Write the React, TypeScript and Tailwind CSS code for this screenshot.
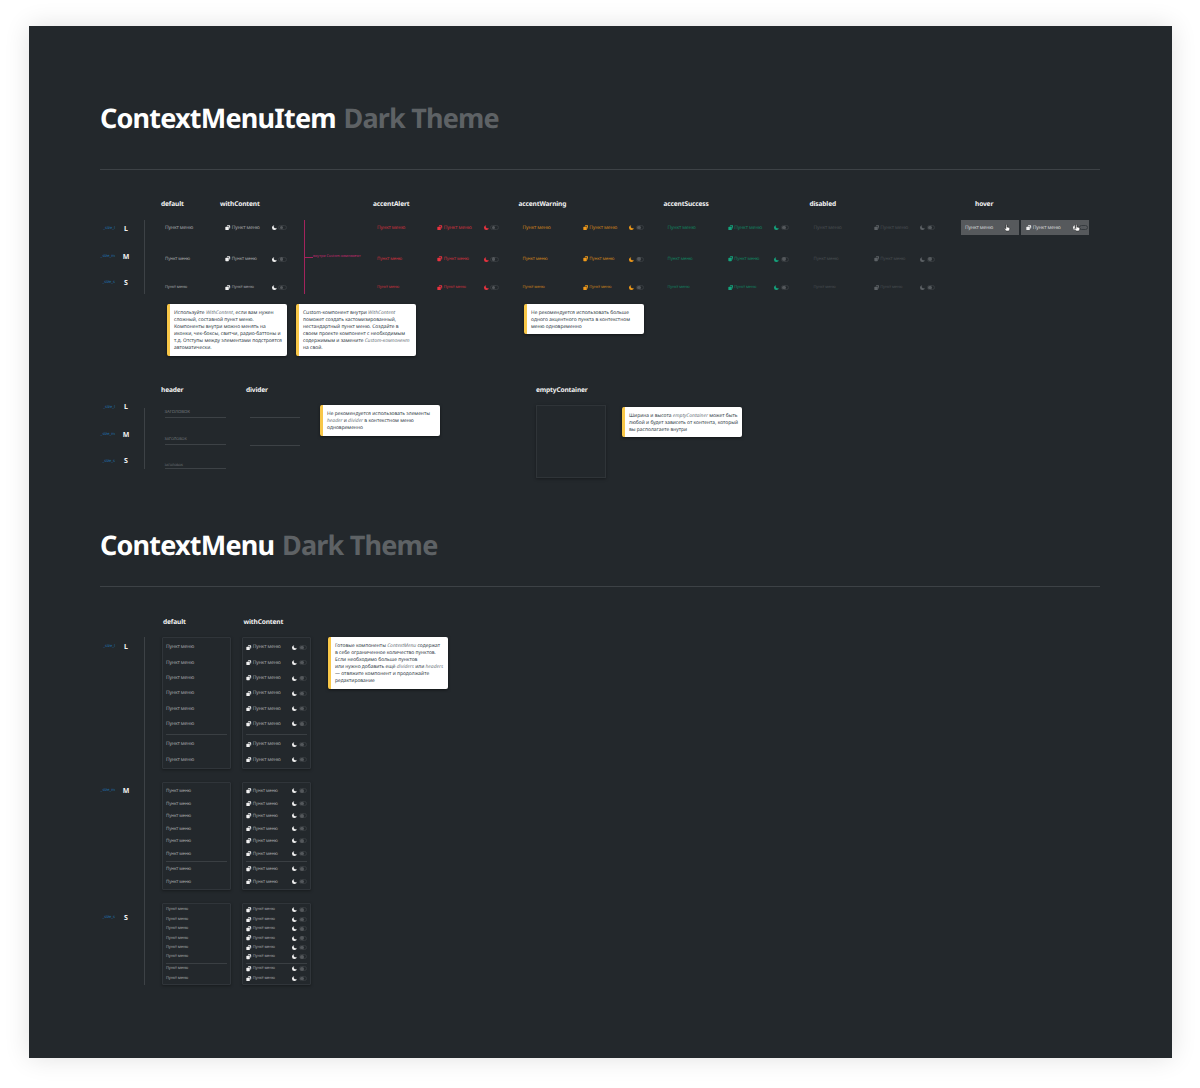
import React from 'react';

type Size = 'l' | 'm' | 's';
type Variant = 'default' | 'alert' | 'warning' | 'success' | 'disabled';

const textSize: Record<Size, string> = {
  l: 'pt-[1px] text-[5px] tracking-[-0.12px]',
  m: 'pt-[1px] text-[4.5px] tracking-[-0.12px]',
  s: 'pt-[1px] text-[4px] tracking-[-0.12px]',
};

const textColor: Record<Variant, string> = {
  default: 'text-[#a3a6a8]',
  alert: 'text-[#c9303d]',
  warning: 'text-[#c9801c]',
  success: 'text-[#12805f]',
  disabled: 'text-[#474c50]',
};

const iconColor: Record<Variant, string> = {
  default: 'text-[#f2f2f2]',
  alert: 'text-[#e8323f]',
  warning: 'text-[#f09a1a]',
  success: 'text-[#14a37c]',
  disabled: 'text-[#5c6165]',
};

function CopyIcon({ className }: { className: string }) {
  return (
    <svg viewBox="0 0 16 16" className={`h-[5.5px] w-[5.5px] shrink-0 fill-current ${className}`}>
      <path d="M5.5 3.5V3a2 2 0 012-2H13a2 2 0 012 2v5.5a2 2 0 01-2 2h-.5V5.5a2 2 0 00-2-2z" />
      <rect x="1" y="5" width="10" height="10" rx="2" />
    </svg>
  );
}

function MoonIcon({ className }: { className: string }) {
  return (
    <svg viewBox="0 0 24 24" className={`h-[5px] w-[5px] shrink-0 fill-current ${className}`}>
      <path d="M11 1a8 8 0 0 0 12 12A11.5 11.5 0 1 1 11 1Z" />
    </svg>
  );
}

function Toggle({ variant = 'default' }: { variant?: Variant }) {
  return (
    <span className="flex h-[5px] w-[8.5px] shrink-0 items-center rounded-full border-[0.5px] border-[#363b3f] pl-[0.5px]">
      <span className={`h-[3.5px] w-[3.5px] rounded-full ${variant === 'disabled' ? 'bg-[#555a5e]' : 'bg-[#54585c]'}`} />
    </span>
  );
}

function Cursor({ className }: { className: string }) {
  return (
    <svg viewBox="0 0 16 16" className={`absolute h-[8px] w-[8px] ${className}`}>
      <path
        d="M6 1.5a1 1 0 012 0V6l4 .8c1 .2 1.5.9 1.5 1.8 0 2-.5 3.6-1.5 5.4H6L3 9.5c-.6-1 .6-1.9 1.4-1.1L6 9.7z"
        fill="#fff"
        stroke="#111"
        strokeWidth="0.9"
      />
    </svg>
  );
}

function PlainItem({ size, variant = 'default', hover }: { size: Size; variant?: Variant; hover?: boolean }) {
  return (
    <div className={`relative flex h-[15px] items-center ${hover ? 'w-[58px] bg-[#56595c] pl-[4px]' : 'pl-[4px]'}`}>
      <span className={`${textSize[size]} ${hover ? 'text-[#d4d5d6]' : textColor[variant]} leading-none`}>Пункт меню</span>
      {hover && <Cursor className="right-[8px] top-[3.5px]" />}
    </div>
  );
}

function ContentItem({ size, variant = 'default', hover }: { size: Size; variant?: Variant; hover?: boolean }) {
  return (
    <div className={`relative flex h-[15px] w-[68px] items-center pl-[5px] pr-[1.5px] ${hover ? 'bg-[#56595c]' : ''}`}>
      <CopyIcon className={iconColor[variant]} />
      <span className={`ml-[1.2px] flex-1 ${textSize[size]} ${hover ? 'text-[#d4d5d6]' : textColor[variant]} leading-none`}>Пункт меню</span>
      <MoonIcon className={`mr-[1.5px] ${iconColor[variant]}`} />
      <Toggle variant={variant} />
      {hover && <Cursor className="right-[8px] top-[3.5px]" />}
    </div>
  );
}

function ColTitle({ children, className = '' }: { children: React.ReactNode; className?: string }) {
  return <div className={`text-[6.6px] font-bold leading-[14px] tracking-[-0.15px] text-[#f2f2f2] ${className}`}>{children}</div>;
}

function SizeLabel({ size, className = '' }: { size: Size; className?: string }) {
  return (
    <div className={`flex h-[12px] items-center ${className}`}>
      <span className="w-[15px] text-right text-[4px] leading-none text-[#1f74b4]">_size_{size}</span>
      <span className="w-[22px] text-center text-[7px] font-bold leading-none text-[#f2f2f2]">{size.toUpperCase()}</span>
    </div>
  );
}

function Note({ children, className = '' }: { children: React.ReactNode; className?: string }) {
  return (
    <div className={`w-[120px] rounded-[2px] border-l-[3px] border-[#f8c748] bg-white pl-[4px] pt-[5.5px] text-[4.95px] leading-[7.1px] whitespace-nowrap text-[#2e3943] shadow-[0_1px_3px_rgba(0,0,0,0.5)] ${className}`}>
      {children}
    </div>
  );
}

function Em({ children }: { children: React.ReactNode }) {
  return <i className="text-[#6d767d]">{children}</i>;
}

function PageTitle({ name }: { name: string }) {
  return (
    <h1 className="text-[27px] font-bold leading-[40px] tracking-[-0.8px] text-white">
      {name} <span className="ml-[1.5px] text-[#5e6265]">Dark Theme</span>
    </h1>
  );
}

function AccentCell({ size, variant }: { size: Size; variant: Variant }) {
  return (
    <div className="grid grid-cols-[59px_68px]">
      <PlainItem size={size} variant={variant} />
      <ContentItem size={size} variant={variant} />
    </div>
  );
}

const sizes: Size[] = ['l', 'm', 's'];

const menuSpec = {
  l: { top: 'pt-[1.7px]', itemH: 'h-[15.33px]', gap: 'h-[5px]', bottom: 'pb-[1px]' },
  m: { top: 'pt-[1.7px]', itemH: 'h-[12.5px]', gap: 'h-[3px]', bottom: 'pb-[1px]' },
  s: { top: 'pt-[1.3px]', itemH: 'h-[9.4px]', gap: 'h-[2.6px]', bottom: 'pb-[1px]' },
};

function MenuRow({ size, content }: { size: Size; content: boolean }) {
  const spec = menuSpec[size];
  if (!content) {
    return (
      <div className={`flex items-center pl-[3px] ${spec.itemH}`}>
        <span className={`${textSize[size]} leading-none text-[#a3a6a8]`}>Пункт меню</span>
      </div>
    );
  }
  return (
    <div className={`flex items-center pl-[3px] pr-[2.5px] ${spec.itemH}`}>
      <CopyIcon className="text-[#f2f2f2]" />
      <span className={`ml-[1.2px] flex-1 ${textSize[size]} leading-none text-[#a3a6a8]`}>Пункт меню</span>
      <MoonIcon className="mr-[1.7px] text-[#f2f2f2]" />
      <Toggle />
    </div>
  );
}

function Menu({ size, content }: { size: Size; content: boolean }) {
  const spec = menuSpec[size];
  return (
    <div className={`w-[68.5px] self-start rounded-[1px] border-[0.5px] border-[#30353a] bg-[#23282c] shadow-[0_1px_3px_rgba(0,0,0,0.35)] ${spec.top} ${spec.bottom}`}>
      {[0, 1, 2, 3, 4, 5].map((i) => (
        <MenuRow key={i} size={size} content={content} />
      ))}
      <div className={`flex items-center px-[3px] ${spec.gap}`}>
        <div className="h-[0.75px] w-full bg-[#3a3f43]" />
      </div>
      {[6, 7].map((i) => (
        <MenuRow key={i} size={size} content={content} />
      ))}
    </div>
  );
}

export default function App() {
  return (
    <div className="h-[1088px] overflow-hidden bg-white pl-[29px] pt-[26px] font-['Noto_Sans',sans-serif] opacity-[0.999] [text-rendering:geometricPrecision]">
      <div className="h-[1032px] w-[1143px] bg-[#23282c] pl-[71px] pr-[72px] pt-[72px] shadow-[0_0_24px_rgba(0,0,0,0.12)]">
        <PageTitle name="ContextMenuItem" />
        <div className="mt-[31px] h-px bg-[#3d4246]" />

        {/* items */}
        <div className="mt-[27px] grid grid-cols-[44px_17px_59px_85px_68px_145.5px_145px_146px_151.5px_1fr] grid-rows-[23px_31.5px_28.5px_14px]">
          <ColTitle className="col-start-3">default</ColTitle>
          <ColTitle>withContent</ColTitle>
          <ColTitle className="col-start-6">accentAlert</ColTitle>
          <ColTitle>accentWarning</ColTitle>
          <ColTitle>accentSuccess</ColTitle>
          <ColTitle>disabled</ColTitle>
          <ColTitle className="pl-[14px]">hover</ColTitle>

          <div className="col-start-1 row-span-3 row-start-2 pt-[3px]">
            <SizeLabel size="l" />
            <SizeLabel size="m" className="mt-[16px]" />
            <SizeLabel size="s" className="mt-[14px]" />
          </div>
          <div className="col-start-2 row-span-3 row-start-2 border-l border-[#3d4246]" />
          <div className="col-start-5 row-span-3 row-start-2 -ml-[1px] flex items-center border-l-[0.75px] border-[#a3245c]">
            <span className="h-[0.75px] w-[8px] bg-[#a3245c]" />
            <span className="text-[3.7px] leading-none whitespace-nowrap text-[#c22a6c]">внутри Custom-компонент</span>
          </div>

          {sizes.map((size, i) => {
            const row = ['row-start-2', 'row-start-3', 'row-start-4'][i];
            return (
              <React.Fragment key={size}>
                <div className={`col-start-3 ${row}`}><PlainItem size={size} /></div>
                <div className={`col-start-4 ${row}`}><ContentItem size={size} /></div>
                <div className={`col-start-6 ${row}`}><AccentCell size={size} variant="alert" /></div>
                <div className={`col-start-7 ${row}`}><AccentCell size={size} variant="warning" /></div>
                <div className={`col-start-8 ${row}`}><AccentCell size={size} variant="success" /></div>
                <div className={`col-start-9 ${row}`}><AccentCell size={size} variant="disabled" /></div>
              </React.Fragment>
            );
          })}
          <div className="col-start-10 row-start-2 flex gap-[2px]">
            <PlainItem size="l" hover />
            <ContentItem size="l" hover />
          </div>
        </div>

        <div className="ml-[67px] mt-[10px] flex items-start">
          <Note className="h-[52px]">
            Используйте <Em>WithContent</Em>, если вам нужен<br />
            сложный, составной пункт меню.<br />
            Компоненты внутри можно менять на<br />
            иконки, чек-боксы, свитчи, радио-баттоны и<br />
            т.д. Отступы между элементами подстроятся<br />
            автоматически.
          </Note>
          <Note className="ml-[9px] h-[52px]">
            Custom-компонент внутри <Em>WithContent</Em><br />
            поможет создать кастомизированный,<br />
            нестандартный пункт меню. Создайте в<br />
            своем проекте компонент с необходимым<br />
            содержимым и замените <Em>Custom-компонент</Em><br />
            на свой.
          </Note>
          <Note className="ml-[108px] h-[30px]">
            Не рекомендуется использовать больше<br />
            одного акцентного пункта в контекстном<br />
            меню одновременно
          </Note>
        </div>

        {/* header, divider, emptyContainer */}
        <div className="mt-[27px] grid grid-cols-[44px_17px_85px_74px_216px_86px_1fr] grid-rows-[22px_auto]">
          <div className="col-start-1 row-span-2 row-start-1 pt-[18.5px]">
            <SizeLabel size="l" />
            <SizeLabel size="m" className="mt-[15.5px]" />
            <SizeLabel size="s" className="mt-[14.5px]" />
          </div>
          <ColTitle className="col-start-3 row-start-1">header</ColTitle>
          <ColTitle className="col-start-4 row-start-1">divider</ColTitle>
          <ColTitle className="col-start-6 row-start-1">emptyContainer</ColTitle>

          <div className="col-start-2 row-start-2 mt-[3px] h-[61px] border-l border-[#3d4246]" />
          <div className="col-start-3 row-start-2 ml-[3.5px] w-[61px]">
            {[
              ['h-[13px]', 'text-[4.25px]', ''],
              ['h-[11px]', 'text-[3.75px]', 'mt-[16px]'],
              ['h-[8px]', 'text-[3.1px]', 'mt-[16px]'],
            ].map(([h, t, m], i) => (
              <div key={i} className={`flex items-center border-b-[0.75px] border-[#3d4246] pt-[2px] ${h} ${m}`}>
                <span className={`${t} leading-none text-[#72777b]`}>ЗАГОЛОВОК</span>
              </div>
            ))}
          </div>
          <div className="col-start-4 row-start-2 ml-[3.5px] w-[50px]">
            <div className="mt-[12px] h-[0.75px] bg-[#3d4246]" />
            <div className="mt-[27px] h-[0.75px] bg-[#3d4246]" />
          </div>
          <div className="col-start-5 row-start-2">
            <Note className="h-[31px]">
              Не рекомендуется использовать элементы<br />
              <Em>header</Em> и <Em>divider</Em> в контекстном меню<br />
              одновременно
            </Note>
          </div>
          <div className="col-start-6 row-start-2 h-[73px] w-[70px] border-[0.5px] border-[#2f3438] shadow-[0_1px_3px_rgba(0,0,0,0.35)]" />
          <div className="col-start-7 row-start-2 pt-[2px]">
            <Note className="h-[30px]">
              Ширина и высота <Em>emptyContainer</Em> может быть<br />
              любой и будет зависеть от контента, который<br />
              вы располагаете внутри
            </Note>
          </div>
        </div>

        <div className="mt-[47px]">
          <PageTitle name="ContextMenu" />
        </div>
        <div className="mt-[21px] h-px bg-[#3d4246]" />

        {/* menus */}
        <div className="mt-[28px] grid grid-cols-[44px_18px_80px_86px_1fr] grid-rows-[22px_145px_121px_82px]">
          <ColTitle className="col-start-3 row-start-1 pl-[1px]">default</ColTitle>
          <ColTitle className="col-start-4 row-start-1 pl-[1.5px]">withContent</ColTitle>
          <div className="col-start-2 row-span-3 row-start-2 border-l border-[#3d4246]" />
          {sizes.map((size, i) => {
            const row = ['row-start-2', 'row-start-3', 'row-start-4'][i];
            const pad = ['pt-[4px]', 'pt-[3px]', 'pt-[9px]'][i];
            return (
              <React.Fragment key={size}>
                <div className={`col-start-1 ${row} ${pad}`}><SizeLabel size={size} /></div>
                <div className={`col-start-3 ${row}`}><Menu size={size} content={false} /></div>
                <div className={`col-start-4 ${row}`}><Menu size={size} content /></div>
              </React.Fragment>
            );
          })}
          <div className="col-start-5 row-start-2">
            <Note className="h-[52px]">
              Готовые компоненты <Em>ContextMenu</Em> содержат<br />
              в себе ограниченное количество пунктов.<br />
              Если необходимо больше пунктов<br />
              или нужно добавить ещё <Em>dividers</Em> или <Em>headers</Em><br />
              — отвяжите компонент и продолжайте<br />
              редактирование
            </Note>
          </div>
        </div>
      </div>
    </div>
  );
}
